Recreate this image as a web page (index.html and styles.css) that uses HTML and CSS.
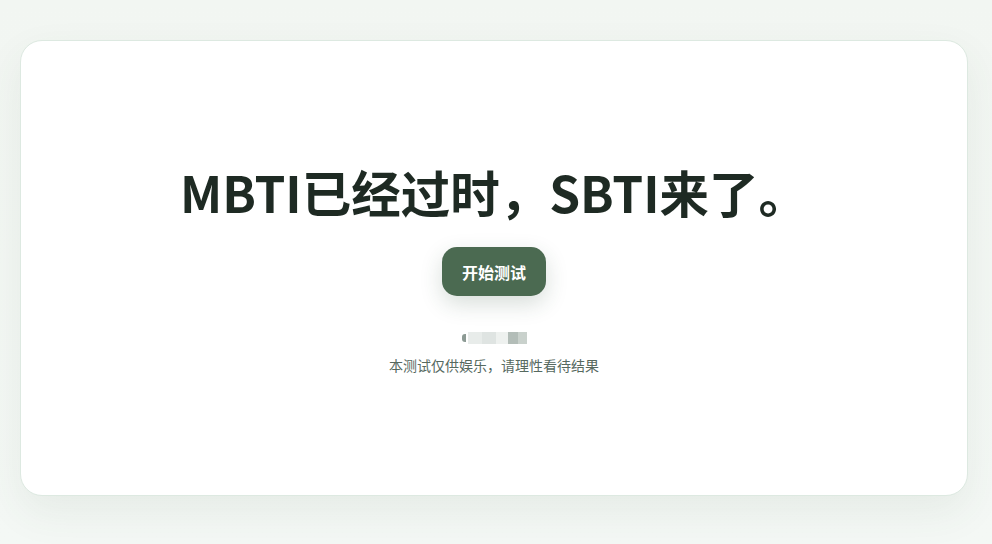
FILE: index.html
```html
<!DOCTYPE html>
<html lang="zh-CN">
<head>
    <meta charset="UTF-8" />
    <meta name="viewport" content="width=device-width, initial-scale=1.0"/>
    <title>SBTI</title>
    <link rel="stylesheet" href="styles.css">
</head>
<body>

    <main class="card">
        <h1 class="title">MBTI已经过时，SBTI来了。</h1>
        <button class="start-btn">开始测试</button>

        <div class="author" aria-hidden="true">
            <span class="px px-1"></span>
            <span class="px px-2"></span>
            <span class="px px-3"></span>
            <span class="px px-4"></span>
            <span class="px px-5"></span>
            <span class="px px-6"></span>
        </div>
        <p class="note">本测试仅供娱乐，请理性看待结果</p>
    </main>

</body>
</html>
```

FILE: styles.css
```css
* {
    box-sizing: border-box;
    margin: 0;
    padding: 0;
}

body {
    font-family: "Noto Sans CJK SC", "Noto Sans", sans-serif;
    background: linear-gradient(180deg, #f2f6f2 0%, #f4f8f5 100%);
    min-height: 100vh;
    padding: 40px 24px 48px 20px;
}

.card {
    width: 948px;
    height: 456px;
    background: #fff;
    border: 1px solid #dde9e1;
    border-radius: 22px;
    box-shadow: 0 16px 40px rgba(60, 90, 70, 0.08);
    display: flex;
    flex-direction: column;
    align-items: center;
    padding-top: 119px;
}

.title {
    font-size: 49.5px;
    font-weight: 700;
    color: #1e2a23;
    line-height: 64px;
    letter-spacing: 0;
}

.start-btn {
    margin-top: 23px;
    width: 104px;
    height: 49px;
    border: none;
    border-radius: 15px;
    background: #4b6a51;
    color: #fff;
    font-family: inherit;
    font-size: 16px;
    font-weight: 700;
    box-shadow: 0 8px 22px rgba(40, 70, 50, 0.18);
    cursor: pointer;
}

/* pixelated name, kept blurred */
.author {
    margin-top: 36px;
    display: flex;
    height: 12px;
    align-items: center;
}

.px {
    display: block;
    height: 12px;
}

.px-1 { width: 4px; height: 8px; background: #8c9a94; border-radius: 3px 0 0 3px; margin-right: 2px; }
.px-2 { width: 14px; background: #e8ecea; }
.px-3 { width: 14px; background: #dfe4e2; }
.px-4 { width: 12px; background: #eef1ef; }
.px-5 { width: 10px; background: #b3bdb8; }
.px-6 { width: 9px; background: #c9d1cc; }

.note {
    margin-top: 11px;
    font-size: 14px;
    color: #56695f;
}
```
